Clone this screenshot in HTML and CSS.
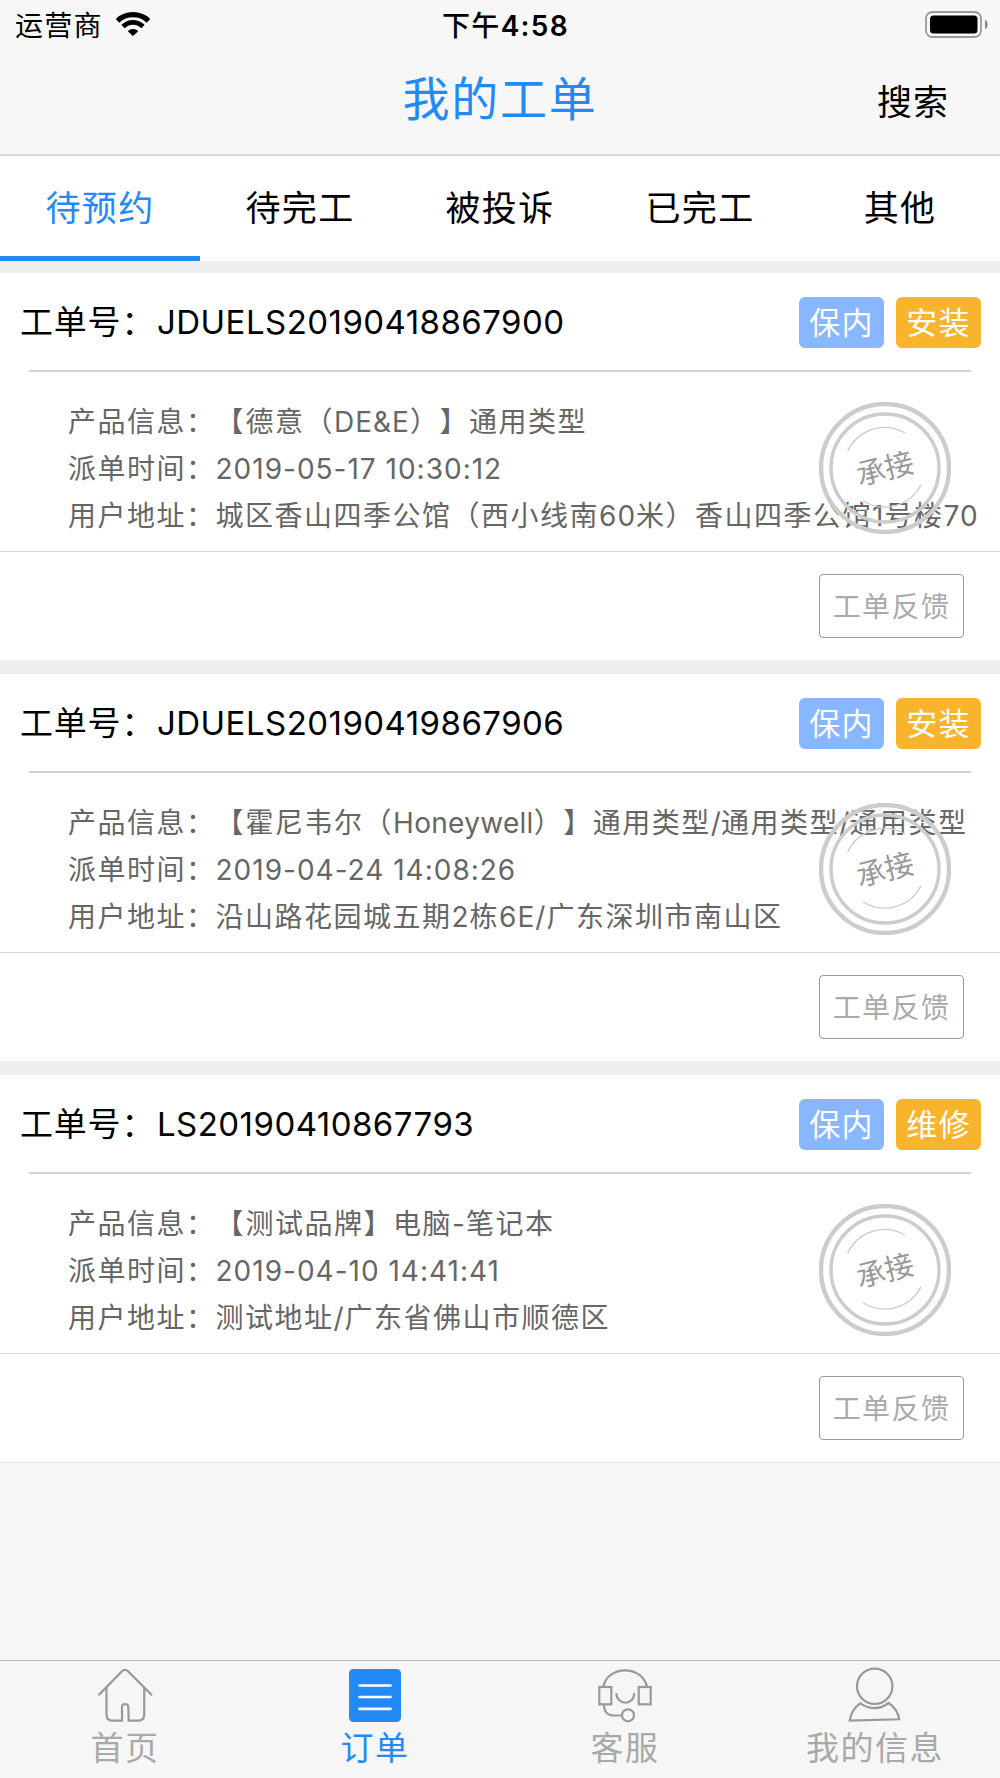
FILE: index.html
```html
<!DOCTYPE html>
<html lang="zh-CN">
<head>
    <meta charset="UTF-8">
    <meta name="viewport" content="width=device-width, initial-scale=1.0">
    <title>我的工单</title>
    <link rel="stylesheet" href="styles.css">
</head>
<body>
    <!-- 印章 -->
    <svg class="defs" width="0" height="0">
        <symbol id="stamp" viewBox="0 0 132 132">
            <g fill="none" stroke="#ccc">
                <circle cx="66" cy="66" r="64" stroke-width="4.4"/>
                <circle cx="66" cy="66" r="54" stroke-width="3.4"/>
                <path d="M28.7 49A40.5 40.5 0 0 1 86 31" stroke-width="1.3"/>
                <path d="M102 82.7A40.5 40.5 0 0 1 44 98.7" stroke-width="1.3"/>
            </g>
        </symbol>
    </svg>

    <header class="header">
        <div class="status">
            <div class="carrier">
                <span>运营商</span>
                <svg class="wifi" width="34" height="24" viewBox="0 0 34 24">
                    <path d="M1.5 8.8C10 .6 24 .6 32.5 8.8" fill="none" stroke="#000" stroke-width="5.2"/>
                    <path d="M7 14.5C13 9 21 9 27 14.5" fill="none" stroke="#000" stroke-width="4.8"/>
                    <path d="M11.8 19.3C14.6 16.3 19.4 16.3 22.2 19.3L17 24Z"/>
                </svg>
            </div>
            <div class="time">下午<span>4:58</span></div>
            <svg class="battery" width="64" height="28" viewBox="0 0 64 28">
                <rect x="1" y="1" width="55" height="25" rx="6.5" fill="none" stroke="#999" stroke-width="1.8"/>
                <rect x="5" y="4.5" width="47.5" height="18" rx="3.5"/>
                <path d="M60 8.5C63.6 10.5 63.6 16.5 60 18.5Z" fill="#888"/>
            </svg>
        </div>
        <div class="navbar">
            <h1>我的工单</h1>
            <a class="search">搜索</a>
        </div>
    </header>

    <nav class="tabs">
        <a class="tab active">待预约</a>
        <a class="tab">待完工</a>
        <a class="tab">被投诉</a>
        <a class="tab">已完工</a>
        <a class="tab">其他</a>
    </nav>

    <main class="list">
        <section class="card">
            <div class="card-head">
                <span class="label">工单号：</span>
                <span class="number">JDUELS20190418867900</span>
                <span class="badge blue">保内</span>
                <span class="badge orange">安装</span>
            </div>
            <div class="card-info">
                <p>产品信息：<em>【</em>德意（<i>DE&amp;E</i>）】通用类型</p>
                <p>派单时间：<i>2019-05-17 10:30:12</i></p>
                <p>用户地址：城区香山四季公馆（西小线南<i>60</i>米）香山四季公馆<i>1</i>号楼<i>70</i></p>
                <div class="stamp"><svg width="132" height="132"><use href="#stamp"/></svg><b>承接</b></div>
            </div>
            <div class="card-foot"><button>工单反馈</button></div>
        </section>

        <section class="card">
            <div class="card-head">
                <span class="label">工单号：</span>
                <span class="number">JDUELS20190419867906</span>
                <span class="badge blue">保内</span>
                <span class="badge orange">安装</span>
            </div>
            <div class="card-info">
                <p>产品信息：<em>【</em>霍尼韦尔（<i class="word">Honeywell</i>）】通用类型<i class="word">/</i>通用类型<i class="word">/</i>通用类型</p>
                <p>派单时间：<i>2019-04-24 14:08:26</i></p>
                <p>用户地址：沿山路花园城五期<i>2</i>栋<i>6E/</i>广东深圳市南山区</p>
                <div class="stamp"><svg width="132" height="132"><use href="#stamp"/></svg><b>承接</b></div>
            </div>
            <div class="card-foot"><button>工单反馈</button></div>
        </section>

        <section class="card">
            <div class="card-head">
                <span class="label">工单号：</span>
                <span class="number">LS20190410867793</span>
                <span class="badge blue">保内</span>
                <span class="badge orange">维修</span>
            </div>
            <div class="card-info">
                <p>产品信息：<em>【</em>测试品牌】电脑<i>-</i>笔记本</p>
                <p>派单时间：<i>2019-04-10 14:41:41</i></p>
                <p>用户地址：测试地址<i>/</i>广东省佛山市顺德区</p>
                <div class="stamp"><svg width="132" height="132"><use href="#stamp"/></svg><b>承接</b></div>
            </div>
            <div class="card-foot"><button>工单反馈</button></div>
        </section>
    </main>

    <!-- 底部导航 -->
    <footer class="tabbar">
        <a>
            <svg width="56" height="56" viewBox="0 0 56 56">
                <path d="M1.5 28.3L25 4.3Q28 1.3 31 4.3L55 28.3M9.5 20.5V47.5Q9.5 53.6 15.5 53.6H25V40Q25 37 28.3 37Q31 37 31.3 40L31.7 53.6H41.3Q47.2 53.6 47.2 47.5V20.5"/>
            </svg>
            <span>首页</span>
        </a>
        <a class="active">
            <svg width="56" height="56" viewBox="0 0 56 56">
                <rect x="2" y="2" width="52" height="53" rx="4.5" fill="#238af5" stroke="none"/>
                <path d="M12.5 18.5H43.5M12.5 30H43.5M12.5 41.8H43.5" stroke="#fff" stroke-width="2.7" stroke-linecap="round"/>
            </svg>
            <span>订单</span>
        </a>
        <a>
            <svg width="56" height="56" viewBox="0 0 56 56">
                <path d="M6.3 19.7C11 -2.2 45 -2.2 50 19.7M19.3 26C20 39 37 39 37.3 26M7 37.5C7 45 11 48.5 16 48.5H24.7"/>
                <rect x="2.3" y="20" width="12" height="17.3"/>
                <rect x="41.7" y="20" width="12" height="17.3"/>
                <circle cx="31" cy="48.3" r="6"/>
            </svg>
            <span>客服</span>
        </a>
        <a>
            <svg width="56" height="56" viewBox="0 0 56 56">
                <circle cx="27.7" cy="19.3" r="17.7"/>
                <path d="M13.3 36.3Q4.5 42 2.7 53.6L52.3 52.3Q50.5 42 41.7 36Q28 46 13.3 36.3Z"/>
            </svg>
            <span>我的信息</span>
        </a>
    </footer>
</body>
</html>
```

FILE: styles.css
```css
* {
    box-sizing: border-box;
}
body {
    margin: 0;
    width: 1000px;
    height: 1778px;
    display: flex;
    flex-direction: column;
    background-color: #f6f6f6;
    color: #000;
    font-family: "Noto Sans CJK SC", sans-serif;
    text-spacing-trim: space-all;
    overflow: hidden;
}
.defs {
    position: absolute;
}
.header {
    height: 156px;
    background-color: #f7f7f7;
    border-bottom: 2px solid #d9d9d9;
}
.status {
    display: grid;
    grid-template-columns: 1fr auto 1fr;
    align-items: center;
    height: 48px;
    padding: 0 11px 0 15px;
    font-size: 28px;
    letter-spacing: 1.3px;
}
.carrier {
    display: flex;
    align-items: center;
    gap: 13px;
}
.carrier .wifi {
    margin-top: -1px;
}
.time {
    font-weight: 500;
    margin-right: -7px;
}
.time span {
    font-family: Inter, sans-serif;
    font-weight: 600;
}
.battery {
    justify-self: end;
    margin-top: 1px;
}
.navbar {
    display: grid;
    grid-template-columns: 1fr auto 1fr;
    align-items: center;
    height: 104px;
    padding: 0 51px;
}
.navbar h1 {
    grid-column: 2;
    margin: -10px 0 0;
    color: #238af5;
    font-size: 47px;
    font-weight: 400;
    letter-spacing: 1.8px;
}
.search {
    justify-self: end;
    margin-top: -2px;
    font-size: 35px;
    letter-spacing: 1px;
}
.tabs {
    display: flex;
    height: 105px;
    background-color: #fff;
}
.tab {
    flex: 1;
    border-bottom: 5px solid transparent;
    font-size: 35px;
    letter-spacing: 1.3px;
    line-height: 100px;
    text-align: center;
}
.tab.active {
    color: #238af5;
    border-color: #238af5;
}
.list {
    flex: 1;
    padding-top: 12px;
    background: linear-gradient(#eee 1200px, #f6f6f6 1200px);
}
.card {
    height: 387px;
    margin-bottom: 14px;
    background-color: #fff;
}
.card:last-child {
    height: 388px;
    border-bottom: 1px solid #e8e8e8;
}
.card-head {
    display: flex;
    align-items: center;
    height: 99px;
    margin: 0 29px;
    border-bottom: 2px solid #d2d2d2;
    font-size: 33px;
}
.label {
    margin: -3px 0 0 -9px;
    width: 137px;
    white-space: nowrap;
    letter-spacing: .8px;
}
.number {
    flex: 1;
    font-family: Inter, sans-serif;
    letter-spacing: .46px;
}
.badge {
    width: 85px;
    height: 51px;
    margin: 2px 0 0 12px;
    border-radius: 6px;
    color: #fff;
    font-size: 31px;
    letter-spacing: 1.3px;
    line-height: 48px;
    text-align: center;
}
.badge:last-child {
    margin-right: -10px;
}
.blue {
    background-color: #88b6ff;
}
.orange {
    background-color: #f7b42c;
}
.card-info {
    position: relative;
    height: 180px;
    padding: 25px 0 0 68px;
    border-bottom: 1px solid #d9d9d9;
    color: #666;
}
.card-info p {
    margin: 0;
    height: 46.8px;
    font-size: 28px;
    line-height: 46.8px;
    letter-spacing: 1.5px;
    white-space: nowrap;
}
.card-info em {
    font-style: normal;
    letter-spacing: 2px;
}
.card-info i {
    font-family: Inter, sans-serif;
    font-style: normal;
    line-height: 1;
    letter-spacing: 1px;
}
.card-info .word {
    letter-spacing: .3px;
}
/* 印章盖在文字上面 */
.stamp {
    position: absolute;
    left: 819px;
    top: 29.5px;
    width: 132px;
    height: 132px;
}
.stamp b {
    position: absolute;
    left: 0;
    top: 0;
    width: 131px;
    color: #999;
    font-size: 29px;
    font-weight: 400;
    line-height: 129px;
    text-align: center;
    transform: rotate(-14deg);
}
.card-foot {
    display: flex;
    justify-content: flex-end;
    padding: 22px 36px 0 0;
}
.card-foot button {
    width: 145px;
    height: 64px;
    padding: 0 0 2px;
    border: 1.5px solid #999;
    border-radius: 4px;
    background: none;
    color: #aaa;
    font-family: inherit;
    font-size: 28px;
    letter-spacing: 1.4px;
}
.tabbar {
    display: flex;
    height: 118px;
    border-top: 1px solid #bbb;
    background-color: #f6f6f6;
}
.tabbar a {
    flex: 1;
    display: flex;
    flex-direction: column;
    align-items: center;
    padding-top: 6px;
    color: #a9a9a9;
    font-size: 33px;
    letter-spacing: 1.5px;
    line-height: 46px;
}
.tabbar svg {
    fill: none;
    stroke: #999;
    stroke-width: 2.2;
}
.tabbar .active {
    color: #238af5;
}
```
